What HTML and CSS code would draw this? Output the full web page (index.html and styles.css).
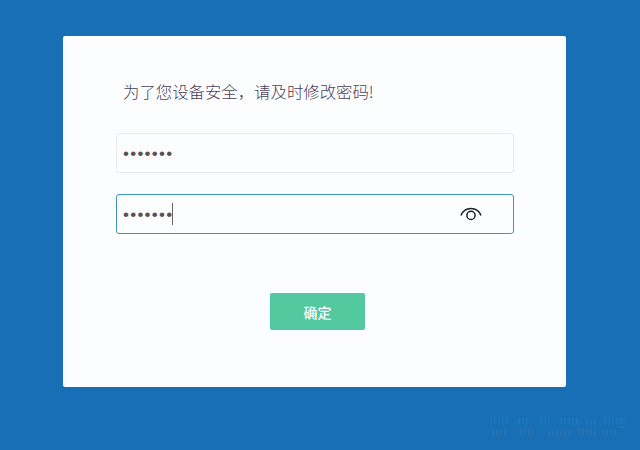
FILE: index.html
```html
<!DOCTYPE html>
<html lang="zh-CN">
<head>
<meta charset="utf-8">
<title>修改密码</title>
<link rel="stylesheet" href="styles.css">
</head>
<body>

<form class="panel">
  <h1 class="title">为了您设备安全，请及时修改密码!</h1>
  <div class="field">
    <span class="dots">•••••••</span>
  </div>
  <div class="field active">
    <span class="dots">•••••••</span>
    <span class="caret"></span>
    <svg class="eye" width="24" height="18" viewBox="0 0 24 18">
      <path d="M2 10.5 A10.6 10.6 0 0 1 22 10.5"/>
      <circle cx="12" cy="10.4" r="4.1"/>
    </svg>
  </div>
  <button class="submit" type="button">确定</button>
</form>

<!-- faint mark in the corner -->
<svg class="mark" width="144" height="24" viewBox="0 0 144 24">
  <path class="light" d="M4 4h20M32 5h12M54 4h10M74 5h18M100 6h10M118 4h18M136 2v12"/>
  <path class="dark" d="M6 17h16M34 16h14M62 18h24M92 16h18M116 17h14"/>
</svg>

</body>
</html>
```

FILE: styles.css
```css
* { box-sizing: border-box; }
body { margin: 0; height: 450px; padding: 36px 74px 0 63px; background: #186fb5; font-family: "Noto Sans CJK SC", sans-serif; overflow: hidden; }
.panel { display: flex; flex-direction: column; width: 503px; height: 351px; padding: 43px 52px 0 53px; background: #fcfdfe; border-radius: 2px; }
.title { margin: 0 0 30px 7px; height: 24px; line-height: 24px; font-size: 16.4px; font-weight: 300; color: #4a4056; white-space: nowrap; }
.field { display: flex; align-items: center; height: 40px; margin-bottom: 21px; padding: 0 30px 0 6px; border: 1px solid #e9ebf1; border-radius: 3px; }
.active { border-color: #3f97b8; }
.dots { padding-top: 2px; font-family: "Liberation Sans", sans-serif; font-size: 17px; line-height: 36px; letter-spacing: 1.25px; color: #5d5055; }
.caret { width: 1px; height: 22px; margin-left: -1px; background: #666; }
.eye { margin-left: auto; fill: none; stroke: #1c2226; stroke-width: 1.5; }
.submit { align-self: center; width: 95px; height: 37px; margin: 38px 0 0 5px; padding: 0; border: 0; border-radius: 2px; background: #52c99f; color: #fff; font-family: inherit; font-size: 14px; font-weight: 500; }
.mark { position: absolute; right: 10px; bottom: 10px; fill: none; stroke-width: 7; stroke-dasharray: 2 2; }
.light { stroke: #1f86d0; opacity: 0.3; }
.dark { stroke: #6b7f99; opacity: 0.18; }
```
